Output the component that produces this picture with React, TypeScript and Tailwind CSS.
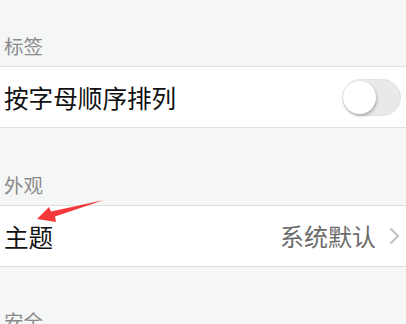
import React from "react";

const font = { fontFamily: '"Noto Sans CJK SC", "Noto Sans", sans-serif' };

function Header({ title, top }: { title: string; top: string }) {
  return (
    <div className={`${top} h-[39px] flex items-end px-[4px] pb-[9px] text-[19.5px] leading-[22px] text-[#8a8a8a]`}>
      {title}
    </div>
  );
}

export default function App() {
  return (
    <div className="relative w-[406px] h-[324px] overflow-hidden bg-[#f5f6f6]" style={font}>
      <Header title="标签" top="mt-[27px]" />
      <div className="h-[62px] bg-white border-y border-[#e0e0e0] flex items-center justify-between pl-[4px] pr-[5px]">
        <span className="text-[24.6px] leading-[30px] text-[#111]">按字母顺序排列</span>
        <div className="relative w-[59px] h-[37px] rounded-full bg-[#e9e9ea] border border-[#e2e2e2]">
          <div className="absolute left-0 top-[1px] w-[33px] h-[33px] rounded-full bg-white shadow-[1px_2px_3px_rgba(0,0,0,0.25)]" />
        </div>
      </div>
      <Header title="外观" top="mt-[38px]" />
      <div className="h-[62px] bg-white border-y border-[#e0e0e0] flex items-center justify-between pl-[4px] pr-[6px]">
        <span className="text-[24.6px] leading-[30px] text-[#111]">主题</span>
        <div className="flex items-center gap-[13px]">
          <span className="text-[24px] leading-[30px] text-[#6b6b6b]">系统默认</span>
          <svg width="11" height="18" viewBox="0 0 11 18">
            <polyline points="1.5,1.5 9,9 1.5,16.5" fill="none" stroke="#c4c4c8" strokeWidth="2.2" />
          </svg>
        </div>
      </div>
      <Header title="安全" top="mt-[35px]" />
      <svg className="absolute left-0 top-0" width="406" height="324" viewBox="0 0 406 324">
        <polygon points="37,219 49,207 51,211.5 104,200 55,216.5 56,222" fill="#f5393a" />
      </svg>
    </div>
  );
}
